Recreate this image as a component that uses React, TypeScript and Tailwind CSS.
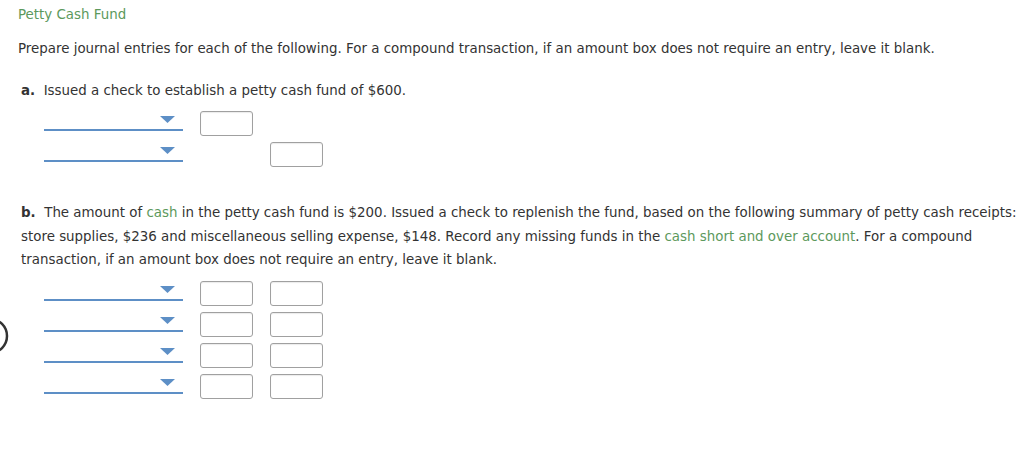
import React from "react";

const font = { fontFamily: "Verdana, 'DejaVu Sans', sans-serif" };

const AccountSelect: React.FC = () => (
  <div className="relative w-[139px] h-[20px] border-b-2 border-[#5d8fc6]">
    <svg
      className="absolute right-[8px] top-[5px]"
      width="15"
      height="7"
      viewBox="0 0 15 7"
    >
      <polygon points="0,0 15,0 7.5,7" fill="#5d8fc6" />
    </svg>
  </div>
);

const AmountBox: React.FC = () => (
  <div className="w-[53px] h-[25px] border border-[#a0a0a0] rounded-[3px] bg-white shadow-[inset_0_1px_1px_rgba(0,0,0,0.08)]" />
);

const Spacer: React.FC = () => <div className="w-[53px] h-[25px]" />;

const Row: React.FC<{ debit?: boolean; credit?: boolean }> = ({
  debit,
  credit,
}) => (
  <div className="flex items-start h-[31px]">
    <div className="mr-[17px]">
      <AccountSelect />
    </div>
    <div className="flex gap-[17px]">
      {debit ? <AmountBox /> : <Spacer />}
      {credit ? <AmountBox /> : <Spacer />}
    </div>
  </div>
);

export default function App() {
  return (
    <div
      className="relative w-[1024px] h-[456px] bg-white text-[13.4px] text-[#333] overflow-hidden"
      style={font}
    >
      {/* stray circle at left edge */}
      <svg
        className="absolute left-0 top-[316px]"
        width="12"
        height="40"
        viewBox="0 0 12 40"
      >
        <circle cx="-10" cy="20" r="17" fill="none" stroke="#333" strokeWidth="2.5" />
      </svg>

      <div className="pl-[18px] pt-[7px]">
        <h1 className="text-[13.4px] leading-[16px] text-[#5c995c] font-normal">
          Petty Cash Fund
        </h1>
        <p className="mt-[17px] leading-[18px]">
          Prepare journal entries for each of the following. For a compound
          transaction, if an amount box does not require an entry, leave it
          blank.
        </p>
      </div>

      {/* part a */}
      <div className="pl-[21px] mt-[24px]">
        <p className="leading-[18px]">
          <span className="font-bold">a.</span>&nbsp; Issued a check to
          establish a petty cash fund of $600.
        </p>
      </div>
      <div className="pl-[44px] mt-[11px]">
        <Row debit />
        <Row credit />
      </div>

      {/* part b */}
      <div className="pl-[21px] pr-[2px] mt-[28px]">
        <p className="leading-[23.5px]">
          <span className="font-bold">b.</span>&nbsp; The amount of{" "}
          <span className="text-[#5c995c]">cash</span> in the petty cash fund
          is $200. Issued a check to replenish the fund, based on the following
          summary of petty cash receipts: store supplies, $236 and
          miscellaneous selling expense, $148. Record any missing funds in the{" "}
          <span className="text-[#5c995c]">cash short and over account</span>.
          For a compound transaction, if an amount box does not require an
          entry, leave it blank.
        </p>
      </div>
      <div className="pl-[44px] mt-[9px]">
        <Row debit credit />
        <Row debit credit />
        <Row debit credit />
        <Row debit credit />
      </div>
    </div>
  );
}
